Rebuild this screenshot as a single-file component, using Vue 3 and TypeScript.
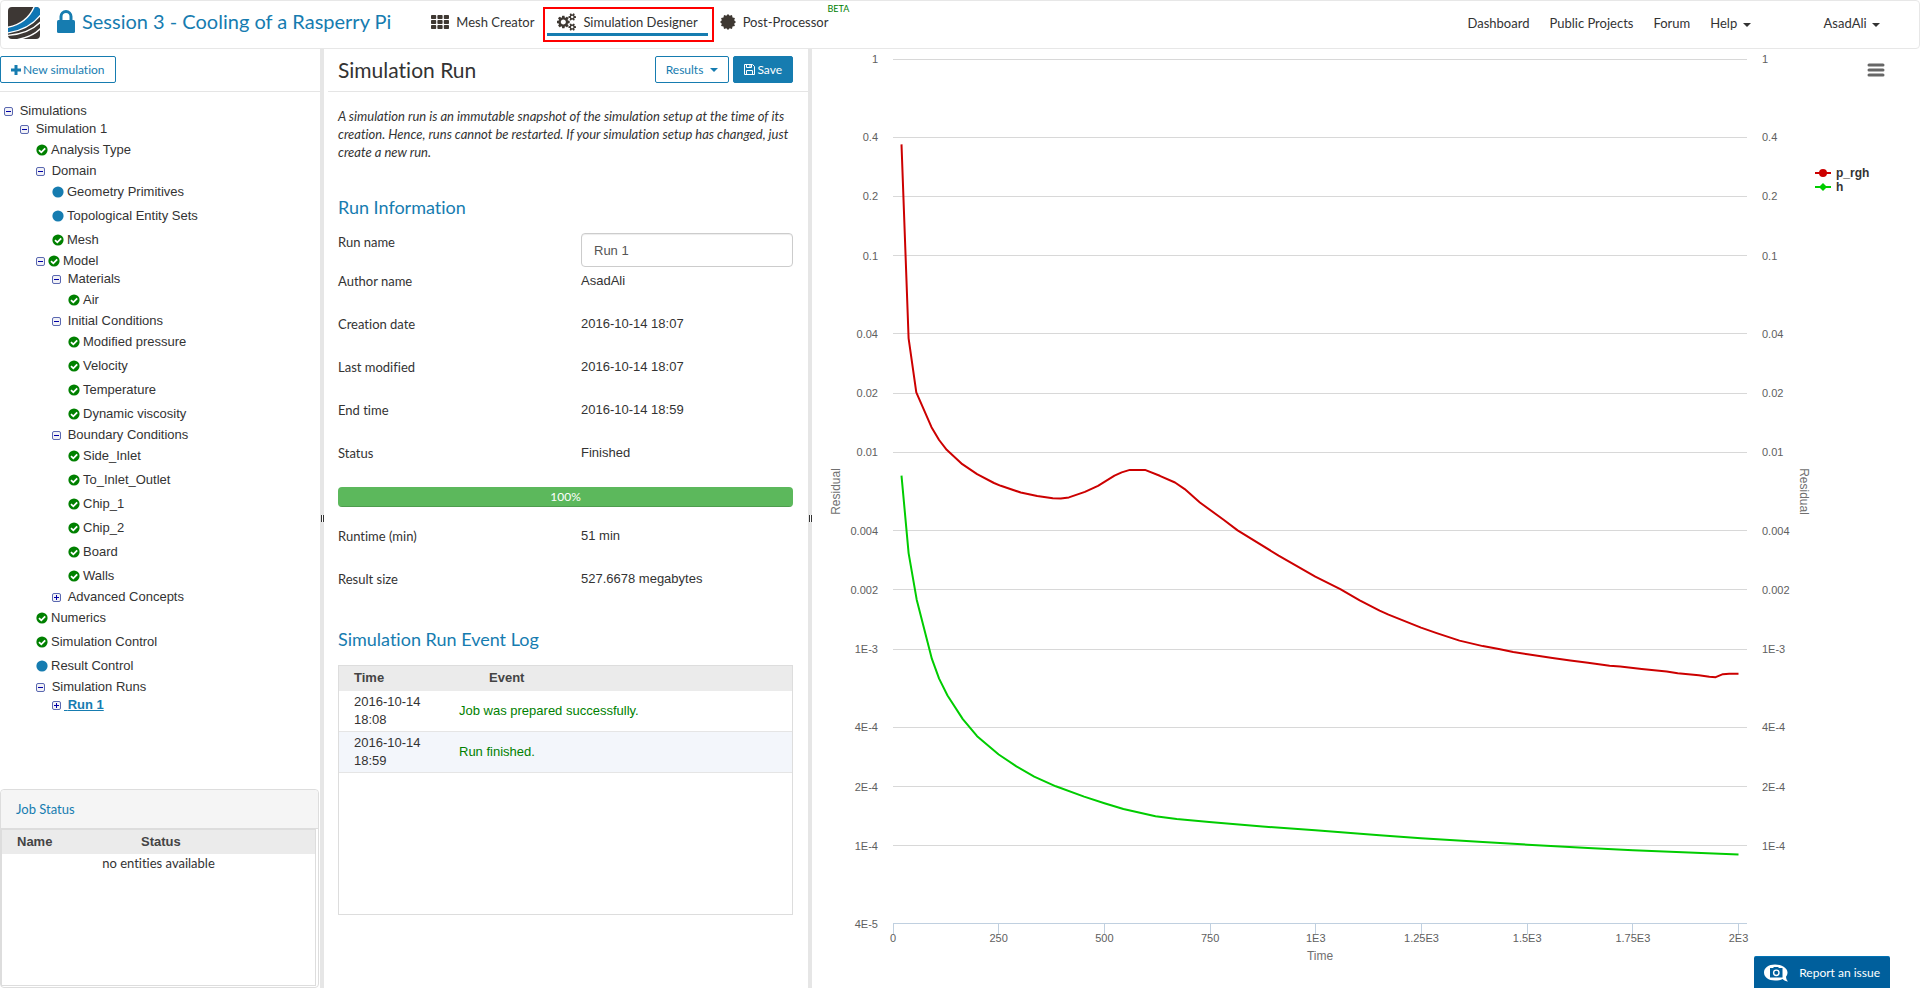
<script setup lang="ts">
import { computed, onBeforeUnmount, onMounted, ref } from 'vue'

type NodeState = 'done' | 'info' | ''
interface TreeNode {
  label: string
  depth: number
  toggle?: 'open' | 'closed'
  state: NodeState
  current?: boolean
}

const nodes: TreeNode[] = [
  { label: 'Simulations', depth: 0, toggle: 'open', state: '' },
  { label: 'Simulation 1', depth: 1, toggle: 'open', state: '' },
  { label: 'Analysis Type', depth: 2, state: 'done' },
  { label: 'Domain', depth: 2, toggle: 'open', state: '' },
  { label: 'Geometry Primitives', depth: 3, state: 'info' },
  { label: 'Topological Entity Sets', depth: 3, state: 'info' },
  { label: 'Mesh', depth: 3, state: 'done' },
  { label: 'Model', depth: 2, toggle: 'open', state: 'done' },
  { label: 'Materials', depth: 3, toggle: 'open', state: '' },
  { label: 'Air', depth: 4, state: 'done' },
  { label: 'Initial Conditions', depth: 3, toggle: 'open', state: '' },
  { label: 'Modified pressure', depth: 4, state: 'done' },
  { label: 'Velocity', depth: 4, state: 'done' },
  { label: 'Temperature', depth: 4, state: 'done' },
  { label: 'Dynamic viscosity', depth: 4, state: 'done' },
  { label: 'Boundary Conditions', depth: 3, toggle: 'open', state: '' },
  { label: 'Side_Inlet', depth: 4, state: 'done' },
  { label: 'To_Inlet_Outlet', depth: 4, state: 'done' },
  { label: 'Chip_1', depth: 4, state: 'done' },
  { label: 'Chip_2', depth: 4, state: 'done' },
  { label: 'Board', depth: 4, state: 'done' },
  { label: 'Walls', depth: 4, state: 'done' },
  { label: 'Advanced Concepts', depth: 3, toggle: 'closed', state: '' },
  { label: 'Numerics', depth: 2, state: 'done' },
  { label: 'Simulation Control', depth: 2, state: 'done' },
  { label: 'Result Control', depth: 2, state: 'info' },
  { label: 'Simulation Runs', depth: 2, toggle: 'open', state: '' },
  { label: 'Run 1', depth: 3, toggle: 'closed', state: '', current: true },
]

const runName = ref('Run 1')
const progress = ref(100)

const details = [
  { label: 'Author name', value: 'AsadAli' },
  { label: 'Creation date', value: '2016-10-14 18:07' },
  { label: 'Last modified', value: '2016-10-14 18:07' },
  { label: 'End time', value: '2016-10-14 18:59' },
  { label: 'Status', value: 'Finished' },
]
const totals = [
  { label: 'Runtime (min)', value: '51 min' },
  { label: 'Result size', value: '527.6678 megabytes' },
]
const events = [
  { time: '2016-10-14 18:08', text: 'Job was prepared successfully.' },
  { time: '2016-10-14 18:59', text: 'Run finished.' },
]

// Residual samples: [time, log10(residual)]
type Sample = [number, number]
const pressure: Sample[] = [
  [20, -0.434], [37, -1.42], [55, -1.695], [91, -1.872], [109, -1.937], [127, -1.987],
  [164, -2.06], [199, -2.111], [239, -2.156], [255, -2.17], [302, -2.204], [341, -2.222],
  [378, -2.233], [397, -2.234], [416, -2.229], [454, -2.201], [485, -2.17], [524, -2.118],
  [541, -2.102], [560, -2.089], [596, -2.089], [631, -2.119], [667, -2.153], [690, -2.187],
  [726, -2.255], [782, -2.343], [815, -2.397], [912, -2.525], [999, -2.632], [1058, -2.695],
  [1104, -2.752], [1151, -2.805], [1172, -2.825], [1249, -2.891], [1286, -2.919], [1340, -2.957],
  [1395, -2.985], [1433, -2.999], [1467, -3.015], [1501, -3.026], [1560, -3.045], [1602, -3.058],
  [1644, -3.07], [1695, -3.085], [1720, -3.089], [1771, -3.101], [1830, -3.114], [1856, -3.123],
  [1906, -3.133], [1931, -3.141], [1946, -3.143], [1963, -3.128], [1978, -3.126], [2000, -3.126],
]
const enthalpy: Sample[] = [
  [20, -2.118], [37, -2.512], [56, -2.749], [92, -3.05], [109, -3.15], [129, -3.236],
  [165, -3.356], [199, -3.443], [250, -3.536], [292, -3.596], [334, -3.649], [385, -3.698],
  [452, -3.75], [500, -3.784], [545, -3.813], [621, -3.85], [671, -3.864], [748, -3.879],
  [874, -3.902], [999, -3.921], [1151, -3.947], [1249, -3.962], [1395, -3.981], [1501, -3.995],
  [1644, -4.011], [1750, -4.023], [2000, -4.044],
]

const yTicks = [
  { label: '1', value: 1 },
  { label: '0.4', value: 0.4 },
  { label: '0.2', value: 0.2 },
  { label: '0.1', value: 0.1 },
  { label: '0.04', value: 0.04 },
  { label: '0.02', value: 0.02 },
  { label: '0.01', value: 0.01 },
  { label: '0.004', value: 0.004 },
  { label: '0.002', value: 0.002 },
  { label: '1E-3', value: 0.001 },
  { label: '4E-4', value: 0.0004 },
  { label: '2E-4', value: 0.0002 },
  { label: '1E-4', value: 0.0001 },
  { label: '4E-5', value: 0.00004 },
]
const gridTicks = yTicks.slice(0, -1)
const xTicks = [
  { label: '0', value: 0 },
  { label: '250', value: 250 },
  { label: '500', value: 500 },
  { label: '750', value: 750 },
  { label: '1E3', value: 1000 },
  { label: '1.25E3', value: 1250 },
  { label: '1.5E3', value: 1500 },
  { label: '1.75E3', value: 1750 },
  { label: '2E3', value: 2000 },
]

const chartBox = ref<HTMLElement | null>(null)
const size = ref({ width: 1108, height: 939 })
let observer: ResizeObserver | undefined

onMounted(() => {
  const box = chartBox.value
  if (!box) return
  const measure = () => {
    size.value = { width: box.clientWidth, height: box.clientHeight }
  }
  measure()
  observer = new ResizeObserver(measure)
  observer.observe(box)
})
onBeforeUnmount(() => observer?.disconnect())

const plot = computed(() => ({
  left: 81,
  right: size.value.width - 173,
  top: 10,
  bottom: size.value.height - 64,
}))
const middleX = computed(() => (plot.value.left + plot.value.right) / 2)
const middleY = computed(() => (plot.value.top + plot.value.bottom) / 2)

const lowest = Math.log10(0.00004)
const xAt = (time: number) =>
  plot.value.left + (time / 2020) * (plot.value.right - plot.value.left)
const yAt = (log: number) =>
  plot.value.top + (log / lowest) * (plot.value.bottom - plot.value.top)
const crisp = (n: number) => Math.floor(n) + 0.5
const line = (samples: Sample[]) =>
  samples.map(([t, v]) => `${xAt(t).toFixed(1)},${yAt(v).toFixed(1)}`).join(' ')

// Twelve-pointed badge outline
const badge = Array.from({ length: 24 }, (_, i) => {
  const radius = i % 2 ? 6.4 : 8
  const angle = (i * Math.PI) / 12
  return `${(8 + radius * Math.cos(angle)).toFixed(2)},${(8 + radius * Math.sin(angle)).toFixed(2)}`
}).join(' ')
</script>

<template>
  <div class="app">
    <header class="navbar">
      <a class="brand" href="#" aria-label="Home">
        <svg width="32" height="32" viewBox="0 0 32 32" aria-hidden="true">
          <defs>
            <clipPath id="brand-shape"><rect width="32" height="32" rx="4" /></clipPath>
          </defs>
          <g clip-path="url(#brand-shape)">
            <rect width="32" height="32" fill="#3d3734" />
            <path d="M-1 21C13 18 22 10 27 -1H33V8C26 17 15 24 -1 26Z" fill="#0f76b4" />
            <path d="M-1 20.5C12 18 22 10 26.500 -1" fill="none" stroke="#fff" stroke-width="1.400" />
            <path d="M-1 26C13 24 25 18 33 7.500" fill="none" stroke="#fff" stroke-width="1.400" />
            <path d="M-1 28.500C14 27.500 25 23 33 14.500" fill="none" stroke="#fff" stroke-width="1.300" />
            <path d="M7 33C17 31.500 27 27.500 33 21" fill="none" stroke="#fff" stroke-width="1.300" />
          </g>
        </svg>
      </a>
      <a class="project" href="#">
        <svg width="18" height="23" viewBox="0 0 18 23" aria-hidden="true">
          <path d="M4 11V6.500a5 5 0 0 1 10 0V11" fill="none" stroke="#167cb0" stroke-width="3" />
          <rect y="10" width="18" height="13" rx="1.500" fill="#167cb0" />
        </svg>
        <span>Session 3 - Cooling of a Rasperry Pi</span>
      </a>
      <nav class="modes" aria-label="Workbench">
        <a class="mode" href="#">
          <svg width="18" height="14" viewBox="0 0 18 14" fill="#3e3832" aria-hidden="true">
            <template v-for="row in 3" :key="row">
              <rect v-for="col in 3" :key="col" :x="(col - 1) * 6.4" :y="(row - 1) * 5" width="5.2" height="4" rx="0.8" />
            </template>
          </svg>
          <span>Mesh Creator</span>
        </a>
        <a class="mode marked" href="#" aria-current="page">
          <span class="underlined">
            <svg width="19" height="18" viewBox="0 0 1920 1792" fill="#3e3832" aria-hidden="true">
              <path d="M896 896q0-106-75-181t-181-75-181 75-75 181 75 181 181 75 181-75 75-181zm768 512q0-52-38-90t-90-38-90 38-38 90q0 53 37.500 90.500t90.500 37.500 90.500-37.500 37.500-90.500zm0-1024q0-52-38-90t-90-38-90 38-38 90q0 53 37.500 90.500t90.500 37.500 90.500-37.500 37.500-90.500zm-384 421v185q0 10-7 19.500t-16 10.500l-155 24q-11 35-32 76 34 48 90 115 7 11 7 20 0 12-7 19-23 30-82.500 89.500t-78.500 59.500q-11 0-21-7l-115-90q-37 19-77 31-11 108-23 155-7 24-30 24h-186q-11 0-20-7.500t-10-17.500l-23-153q-34-10-75-31l-118 89q-7 7-20 7-11 0-21-8-144-133-144-160 0-9 7-19 10-14 41-53t47-61q-23-44-35-82l-152-24q-10-1-17-9.500t-7-19.500v-185q0-10 7-19.500t16-10.500l155-24q11-35 32-76-34-48-90-115-7-11-7-20 0-12 7-20 22-30 82-89t79-59q11 0 21 7l115 90q34-18 77-32 11-108 23-154 7-24 30-24h186q11 0 20 7.500t10 17.500l23 153q34 10 75 31l118-89q8-7 20-7 11 0 21 8 144 133 144 160 0 8-7 19-12 16-42 54t-45 60q23 48 34 82l152 23q10 2 17 10.500t7 19.500zm640 533v140q0 16-149 31-12 27-30 52 51 113 51 138 0 4-4 7-122 71-124 71-8 0-46-47t-52-68q-20 2-30 2t-30-2q-14 21-52 68t-46 47q-2 0-124-71-4-3-4-7 0-25 51-138-18-25-30-52-149-15-149-31v-140q0-16 149-31 13-29 30-52-51-113-51-138 0-4 4-7 4-2 35-20t59-34 30-16q8 0 46 46.500t52 67.500q20-2 30-2t30 2q51-71 92-112l6-2q4 0 124 70 4 3 4 7 0 25-51 138 17 23 30 52 149 15 149 31zm0-1024v140q0 16-149 31-12 27-30 52 51 113 51 138 0 4-4 7-122 71-124 71-8 0-46-47t-52-68q-20 2-30 2t-30-2q-14 21-52 68t-46 47q-2 0-124-71-4-3-4-7 0-25 51-138-18-25-30-52-149-15-149-31v-140q0-16 149-31 13-29 30-52-51-113-51-138 0-4 4-7 4-2 35-20t59-34 30-16q8 0 46 46.500t52 67.500q20-2 30-2t30 2q51-71 92-112l6-2q4 0 124 70 4 3 4 7 0 25-51 138 17 23 30 52 149 15 149 31z" />
            </svg>
            <span>Simulation Designer</span>
          </span>
        </a>
        <a class="mode" href="#">
          <svg width="16" height="16" viewBox="0 0 16 16" fill="#3e3832" aria-hidden="true">
            <polygon :points="badge" />
          </svg>
          <span>Post-Processor</span>
          <sup class="beta">BETA</sup>
        </a>
      </nav>
      <nav class="links" aria-label="Site">
        <a href="#">Dashboard</a>
        <a href="#">Public Projects</a>
        <a href="#">Forum</a>
        <button type="button" class="plain">Help <span class="caret"></span></button>
        <button type="button" class="plain user">AsadAli <span class="caret"></span></button>
      </nav>
    </header>

    <div class="workspace">
      <aside class="sidebar">
        <div class="bar">
          <button type="button" class="btn">
            <svg width="10" height="10" viewBox="0 0 10 10" aria-hidden="true">
              <path d="M5 0V10M0 5H10" stroke="#167cb0" stroke-width="3" />
            </svg>
            <span>New simulation</span>
          </button>
        </div>
        <ul class="tree">
          <li
            v-for="node in nodes"
            :key="node.label"
            class="node"
            :class="['depth-' + node.depth, node.toggle ? 'branch' : 'leaf']"
          >
            <button
              v-if="node.toggle"
              type="button"
              class="toggle"
              :aria-label="(node.toggle === 'open' ? 'Collapse ' : 'Expand ') + node.label"
            >
              <svg width="9" height="9" viewBox="0 0 9 9" aria-hidden="true">
                <rect x="0.5" y="0.5" width="8" height="8" rx="1.500" fill="#f1f1f6" stroke="#5a68b0" />
                <path :d="node.toggle === 'open' ? 'M2 4.500H7' : 'M2 4.500H7M4.500 2V7'" stroke="#0000a8" />
              </svg>
            </button>
            <svg v-if="node.state" class="state" width="12" height="12" viewBox="0 0 12 12" aria-hidden="true">
              <circle cx="6" cy="6" r="5.600" :fill="node.state === 'done' ? '#008000' : '#167cb0'" />
              <path v-if="node.state === 'done'" d="M3 6.200L5.300 8.300L9.200 4.300" fill="none" stroke="#fff" stroke-width="1.800" />
            </svg>
            <a href="#" :class="{ current: node.current }"><template v-if="node.toggle && !node.state">&nbsp;</template>{{ node.label }}</a>
          </li>
        </ul>
        <section class="jobs">
          <h2>Job Status</h2>
          <div class="jobs-body">
            <table>
              <thead>
                <tr><th>Name</th><th>Status</th></tr>
              </thead>
              <tbody>
                <tr><td colspan="2">no entities available</td></tr>
              </tbody>
            </table>
          </div>
        </section>
      </aside>

      <div class="splitter" role="separator" aria-orientation="vertical"><span class="grip"></span></div>

      <main class="panel">
        <div class="bar panel-bar">
          <h1>Simulation Run</h1>
          <button type="button" class="btn">Results <span class="caret"></span></button>
          <button type="button" class="btn primary">
            <svg width="11" height="11" viewBox="0 0 11 11" fill="none" stroke="#fff" aria-hidden="true">
              <path d="M0.500 0.500H8.500L10.500 2.500V10.500H0.500Z" />
              <path d="M2.500 10.500V6.500H8.500V10.500M2.500 0.500V3.500H7.500V0.500" />
              <path d="M6 1V3" />
            </svg>
            <span>Save</span>
          </button>
        </div>
        <div class="content">
          <p class="note">
            A simulation run is an immutable snapshot of the simulation setup at the time of its
            creation. Hence, runs cannot be restarted. If your simulation setup has changed, just
            create a new run.
          </p>
          <h2 class="first">Run Information</h2>
          <div class="field name-field">
            <label for="run-name">Run name</label>
            <input id="run-name" v-model="runName" type="text" />
          </div>
          <div v-for="item in details" :key="item.label" class="field">
            <span>{{ item.label }}</span>
            <span class="value">{{ item.value }}</span>
          </div>
          <div class="progress" role="progressbar" :aria-valuenow="progress" aria-valuemin="0" aria-valuemax="100">
            <div class="progress-fill" :style="{ width: progress + '%' }">{{ progress }}%</div>
          </div>
          <div v-for="item in totals" :key="item.label" class="field">
            <span>{{ item.label }}</span>
            <span class="value">{{ item.value }}</span>
          </div>
          <h2 class="second">Simulation Run Event Log</h2>
          <div class="log">
            <table>
              <thead>
                <tr><th class="time">Time</th><th class="event">Event</th></tr>
              </thead>
              <tbody>
                <tr v-for="event in events" :key="event.time">
                  <td class="time">{{ event.time }}</td>
                  <td class="message">{{ event.text }}</td>
                </tr>
              </tbody>
            </table>
          </div>
        </div>
      </main>

      <div class="splitter" role="separator" aria-orientation="vertical"><span class="grip"></span></div>

      <section ref="chartBox" class="chart" aria-label="Residuals">
        <svg class="plot" :width="size.width" :height="size.height">
          <g stroke="#d8d8d8">
            <line
              v-for="tick in gridTicks"
              :key="tick.label"
              :x1="plot.left"
              :x2="plot.right"
              :y1="crisp(yAt(Math.log10(tick.value)))"
              :y2="crisp(yAt(Math.log10(tick.value)))"
            />
          </g>
          <g stroke="#c0d0e0">
            <line :x1="plot.left" :x2="plot.right" :y1="plot.bottom - 0.5" :y2="plot.bottom - 0.5" />
            <line
              v-for="tick in xTicks"
              :key="tick.label"
              :x1="crisp(xAt(tick.value))"
              :x2="crisp(xAt(tick.value))"
              :y1="plot.bottom"
              :y2="plot.bottom + 10"
            />
          </g>
          <g class="tick-text">
            <text
              v-for="tick in yTicks"
              :key="tick.label"
              :x="plot.left - 15"
              :y="yAt(Math.log10(tick.value)) + 4"
              text-anchor="end"
            >{{ tick.label }}</text>
            <text
              v-for="tick in gridTicks"
              :key="tick.label"
              :x="plot.right + 15"
              :y="yAt(Math.log10(tick.value)) + 4"
            >{{ tick.label }}</text>
            <text
              v-for="tick in xTicks"
              :key="tick.label"
              :x="xAt(tick.value)"
              :y="plot.bottom + 18"
              text-anchor="middle"
            >{{ tick.label }}</text>
          </g>
          <g class="axis-text" text-anchor="middle">
            <text :x="middleX" :y="plot.bottom + 36">Time</text>
            <text :transform="`translate(28 ${middleY}) rotate(-90)`">Residual</text>
            <text :transform="`translate(${plot.right + 53} ${middleY}) rotate(90)`">Residual</text>
          </g>
          <g fill="none" stroke-width="2" stroke-linejoin="round">
            <polyline :points="line(pressure)" stroke="#cc0000" />
            <polyline :points="line(enthalpy)" stroke="#00cc00" />
          </g>
          <g class="legend" :transform="`translate(${plot.right + 68} 124)`">
            <path d="M0 0H16" stroke="#cc0000" stroke-width="2" />
            <circle cx="8" cy="0" r="4" fill="#cc0000" />
            <text x="21" y="4">p_rgh</text>
            <path d="M0 14H16" stroke="#00cc00" stroke-width="2" />
            <path d="M8 10L12 14L8 18L4 14Z" fill="#00cc00" />
            <text x="21" y="18">h</text>
          </g>
        </svg>
        <button type="button" class="chart-menu" aria-label="Chart menu">
          <svg width="18" height="14" viewBox="0 0 18 14" aria-hidden="true">
            <path d="M2 2H16M2 7H16M2 12H16" stroke="#666" stroke-width="3" stroke-linecap="round" />
          </svg>
        </button>
      </section>
    </div>

    <button type="button" class="report">
      <svg width="24" height="18" viewBox="0 0 24 18" aria-hidden="true">
        <path d="M11 0.500C4.500 0.500 0 3.800 0 8.500S4.500 16.500 11 16.500C14 16.500 16.600 16 18.600 15C20 16.400 21.800 17.300 24 17.500C22.800 16.300 22.200 14.800 22 12.700C23 11.500 23.500 10 23.500 8.500C23.500 3.800 17.500 0.500 11 0.500Z" fill="#fff" />
        <path d="M6 4H9L10 3H14L15 4H18.500V13.500H6Z" fill="#005f9c" />
        <circle cx="12.300" cy="8.800" r="2.700" fill="none" stroke="#fff" stroke-width="1.400" />
      </svg>
      <span>Report an issue</span>
    </button>
  </div>
</template>

<style>
body {
  margin: 0;
  background: #fff;
}
</style>

<style scoped>
.app {
  display: flex;
  flex-direction: column;
  min-height: 100vh;
  color: #333;
  font-family: Lato, sans-serif;
  font-size: 13px;
  line-height: 18px;
  font-variant-ligatures: no-common-ligatures;
}
.app * {
  box-sizing: border-box;
}
svg {
  flex: none;
  display: block;
}
a {
  color: inherit;
  text-decoration: none;
}
button {
  font-family: inherit;
  font-size: inherit;
  line-height: inherit;
  font-variant-ligatures: inherit;
  color: inherit;
  cursor: pointer;
}
h1,
h2,
p,
ul {
  margin: 0;
  padding: 0;
  font-weight: 400;
}
.caret {
  display: inline-block;
  margin-left: 2px;
  vertical-align: middle;
  border-top: 4px solid currentColor;
  border-left: 4px solid transparent;
  border-right: 4px solid transparent;
}

.navbar {
  display: flex;
  align-items: center;
  height: 49px;
  padding: 0 39px 3px 7px;
  border: 1px solid #e7e7e7;
  border-radius: 4px;
}
.project {
  display: flex;
  align-items: center;
  gap: 7px;
  margin-left: 17px;
  padding-bottom: 4px;
  color: #167cb0;
  font-size: 20px;
  line-height: 24px;
}
.modes {
  display: flex;
  align-items: center;
  margin-left: 40px;
  padding-bottom: 2px;
}
.mode {
  display: flex;
  align-items: center;
  gap: 7px;
}
.marked {
  margin: 5px 6px 0 9px;
  padding: 0 4px 4px 2px;
  border: 2px solid #f00;
}
.underlined {
  display: flex;
  align-items: center;
  gap: 7px;
  padding: 4px 10px 2px;
  border-bottom: 3px solid #167cb0;
}
.beta {
  align-self: flex-start;
  margin: -10px 0 0 -8px;
  color: #008000;
  font-size: 9px;
  line-height: 12px;
}
.links {
  display: flex;
  align-items: center;
  gap: 20px;
  margin-left: auto;
}
.plain {
  padding: 0;
  border: 0;
  background: none;
}
.user {
  margin-left: 53px;
}

.workspace {
  flex: 1;
  display: grid;
  grid-template-columns: 320px 4px 484px 4px minmax(0, 1fr);
}
.splitter {
  display: flex;
  align-items: center;
  justify-content: flex-end;
  background: #e6e6e6;
}
.grip {
  width: 3px;
  height: 7px;
  border: solid #333;
  border-width: 0 1px;
  background: #fff;
}
.bar {
  display: flex;
  align-items: center;
  height: 43px;
  padding-bottom: 1px;
  border-bottom: 1px solid #e5e5e5;
}
.btn {
  display: flex;
  align-items: center;
  justify-content: center;
  gap: 2px;
  height: 27px;
  padding: 0 10px;
  border: 1px solid #167cb0;
  border-radius: 2px;
  background: #fff;
  color: #167cb0;
  font-size: 12px;
}
.btn .caret {
  margin-left: 5px;
}
.primary {
  background: #167cb0;
  color: #fff;
}

.sidebar {
  display: flex;
  flex-direction: column;
}
.tree {
  flex: 1;
  padding: 10px 0;
  list-style: none;
  font: 13px/18px "Liberation Sans", Arial, sans-serif;
}
.node {
  display: flex;
  align-items: center;
  gap: 3px;
  height: 18px;
}
.leaf {
  height: 24px;
}
.depth-0 { padding-left: 4px; }
.depth-1 { padding-left: 20px; }
.depth-2 { padding-left: 36px; }
.depth-3 { padding-left: 52px; }
.depth-4 { padding-left: 68px; }
.toggle {
  padding: 1px 0 0;
  border: 0;
  background: none;
}
.current {
  color: #167cb0;
  font-weight: 700;
  text-decoration: underline;
}
.jobs {
  display: flex;
  flex-direction: column;
  height: 199px;
  margin-right: 1px;
  border: 1px solid #ddd;
  border-radius: 4px;
}
.jobs h2 {
  padding: 10px 15px;
  border-bottom: 1px solid #ddd;
  border-radius: 4px 4px 0 0;
  background: #f5f5f5;
  color: #167cb0;
  font-size: 13px;
}
.jobs-body {
  flex: 1;
  margin: 0 2px 1px 0;
  border: 1px solid #ddd;
}
table {
  width: 100%;
  border-collapse: collapse;
}
th {
  background: #ebebeb;
  color: #444;
  font: 700 13px/18px "Liberation Sans", Arial, sans-serif;
  text-align: left;
}
.jobs th {
  padding: 3px 15px;
}
.jobs th:last-child {
  width: 189px;
}
.jobs td {
  padding: 0;
  text-align: center;
}

.panel {
  min-width: 0;
}
.panel-bar {
  gap: 4px;
  margin-left: 4px;
  padding-left: 10px;
  padding-right: 15px;
}
h1 {
  margin-right: auto;
  font-size: 21px;
  line-height: 26px;
}
.content {
  padding: 15px 15px 20px 14px;
}
.note {
  font-style: italic;
}
.content h2 {
  margin-bottom: 14px;
  color: #167cb0;
  font-size: 18px;
  line-height: 24px;
}
.first {
  margin-top: 34px;
}
.second {
  margin-top: 14px;
}
.field {
  display: grid;
  grid-template-columns: 243px minmax(0, 1fr);
  align-items: start;
  min-height: 43px;
}
.name-field {
  min-height: 39px;
}
.value {
  font: 13px/18px "Liberation Sans", Arial, sans-serif;
}
input {
  width: 100%;
  height: 34px;
  padding: 0 12px;
  border: 1px solid #ccc;
  border-radius: 4px;
  background: #fff;
  box-shadow: inset 0 1px 1px rgba(0, 0, 0, 0.075);
  color: #555;
  font: 13px/18px "Liberation Sans", Arial, sans-serif;
}
.progress {
  height: 20px;
  margin-bottom: 20px;
  overflow: hidden;
  border-radius: 4px;
  background: #f5f5f5;
}
.progress-fill {
  height: 100%;
  background: #5cb85c;
  box-shadow: inset 0 -1px 0 rgba(0, 0, 0, 0.15);
  color: #fff;
  font-size: 12px;
  line-height: 20px;
  text-align: center;
}
.log {
  min-height: 250px;
  border: 1px solid #ddd;
  font: 13px/18px "Liberation Sans", Arial, sans-serif;
}
.log th {
  padding: 3px 15px 4px;
}
.log th.event {
  padding-left: 45px;
}
.log .time {
  width: 105px;
  padding-right: 10px;
}
.log td {
  padding: 2px 15px;
  border-bottom: 1px solid #e5e5e5;
}
.log tbody tr:nth-child(even) {
  background: #f3f6fb;
}
.log .message {
  color: #008000;
}

.chart {
  position: relative;
  min-width: 0;
  overflow: hidden;
}
.plot {
  position: absolute;
  inset: 0;
  font-family: "Liberation Sans", Arial, sans-serif;
}
.tick-text {
  fill: #606060;
  font-size: 11px;
}
.axis-text {
  fill: #707070;
  font-size: 12px;
}
.legend {
  fill: #333;
  font-size: 12px;
  font-weight: 700;
}
.chart-menu {
  position: absolute;
  top: 14px;
  right: 35px;
  padding: 0;
  border: 0;
  background: none;
}
.report {
  position: fixed;
  right: 30px;
  bottom: 0;
  display: flex;
  align-items: center;
  gap: 11px;
  height: 32px;
  padding: 0 10px;
  border: 0;
  border-top: 1px solid #0073b5;
  border-radius: 2px 2px 0 0;
  background: #005f9c;
  color: #fff;
  font-size: 12px;
}
</style>
